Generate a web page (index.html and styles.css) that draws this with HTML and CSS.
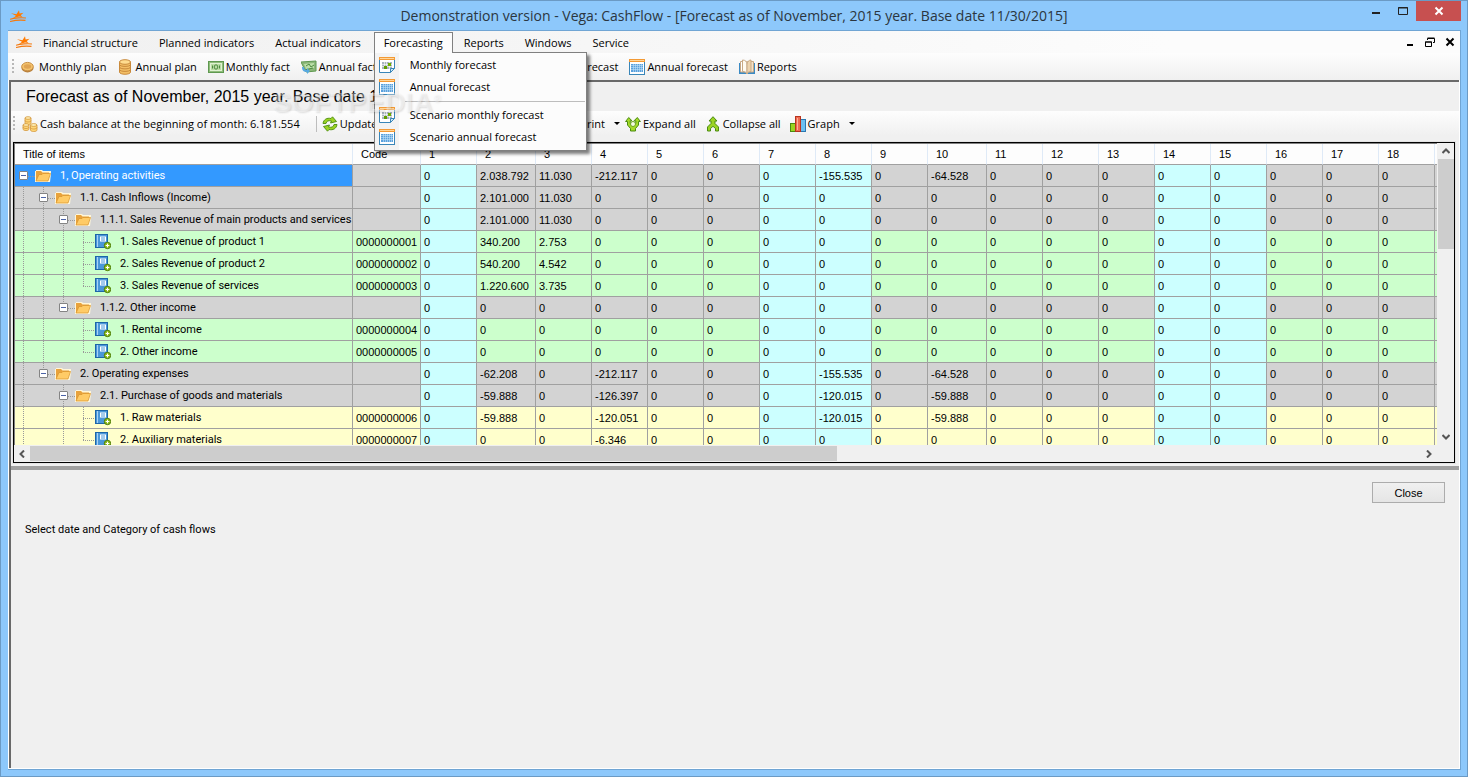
FILE: index.html
```html
<!DOCTYPE html>
<html lang="en">
<head>
    <meta charset="UTF-8">
    <meta name="viewport" content="width=device-width, initial-scale=1.0">
    <title>Vega: CashFlow</title>
    <link rel="stylesheet" href="styles.css">
</head>
<body>
    <svg class="sprite" aria-hidden="true">
        <symbol id="i-logo" viewBox="0 0 16 12">
            <path d="M0 9.3 C4 8 12 7.3 16 8 M0 11.6 C5 10.2 11 9.8 15.5 10.4" fill="none" stroke="#f47a10" stroke-width="1.1"/>
            <path d="M1 3.2 L6.5 4.2 L9 0.3 L9.6 3.6 L13.5 2.8 L10.7 5.2 L12.5 7 L9 6.5 L3 8.2 L6 5.8 Z" fill="#ff7a00"/>
        </symbol>
        <symbol id="i-coin" viewBox="0 0 16 16">
            <ellipse cx="6.5" cy="9" rx="6" ry="4.4" fill="#b9803c"/>
            <ellipse cx="6.5" cy="7.6" rx="5.8" ry="4.2" fill="#f3c26c" stroke="#c98f45"/>
            <ellipse cx="6.5" cy="7.5" rx="3.6" ry="2.2" fill="#dfa352"/>
        </symbol>
        <symbol id="i-coins" viewBox="0 0 16 16">
            <path d="M2.5 3v10c0 3 11 3 11 0V3z" fill="#f3bf66" stroke="#c98a3c"/>
            <path d="M2.5 5.5c0 2.5 11 2.5 11 0M2.5 8c0 2.5 11 2.5 11 0M2.5 10.5c0 2.5 11 2.5 11 0" fill="none" stroke="#c98a3c"/>
            <ellipse cx="8" cy="3" rx="5.5" ry="2.3" fill="#ffdc8f" stroke="#c98a3c"/>
        </symbol>
        <symbol id="i-note" viewBox="0 0 16 16">
            <rect x="0.5" y="2.5" width="15" height="11" fill="#8fbc7a" stroke="#5f9950"/>
            <rect x="2.5" y="4.5" width="11" height="7" fill="#b9dca4" stroke="#dff2d2"/>
            <ellipse cx="8" cy="8" rx="1.8" ry="2.2" fill="none" stroke="#4c8a3f"/>
            <path d="M4.5 6.5v3M11.5 6.5v3" stroke="#4c8a3f"/>
        </symbol>
        <symbol id="i-notes" viewBox="0 0 16 16">
            <path d="M0 3l15-1v10l-10 1z" fill="#8cb87a" stroke="#5f9950"/>
            <path d="M3 5l10-1v5l-8 1z" fill="#bcdfa8"/>
            <path d="M5 7l3-2 2 3 3-2M4 11l8-2" stroke="#4c8a3f" fill="none"/>
            <path d="M1 8c0 4 2 5 5 5v2l3-3-3-3v2c-2 0-3-1-3-3z" fill="#58a9e0"/>
        </symbol>
        <symbol id="i-month" viewBox="0 0 16 16">
            <path d="M0.5 2v13.500h11l4-4V2z" fill="#fff" stroke="#3a86b8"/>
            <rect width="16" height="3" fill="#f39a35"/>
            <path d="M1 1.500h14" stroke="#ffd79c"/>
            <rect x="3" y="5" width="10" height="7" fill="#a9b5be"/>
            <path d="M3 7.500h10M3 9.500h10M5.500 5v7M7.500 5v7M10.500 5v7" stroke="#fff" stroke-width="0.6"/>
            <rect x="9" y="6" width="3" height="3" fill="#6fae00"/>
            <rect x="5" y="9" width="3" height="3" fill="#5f9c00"/>
            <path d="M11.500 15.500v-4h4z" fill="#cfe8f7" stroke="#3a86b8"/>
        </symbol>
        <symbol id="i-year" viewBox="0 0 16 16">
            <rect x="0.5" y="1.5" width="15" height="14" fill="#fff" stroke="#3a86b8"/>
            <rect width="16" height="3" fill="#f39a35"/>
            <path d="M1 1.500h14" stroke="#ffd79c"/>
            <rect x="2" y="5" width="12" height="8" fill="#5ba0dc"/>
            <path d="M2 6.500h12M2 8.500h12M2 10.500h12M4.500 5v8M6.500 5v8M8.500 5v8M10.500 5v8M12.500 5v8" stroke="#bfe0f8" stroke-width="0.6"/>
        </symbol>
        <symbol id="i-book" viewBox="0 0 16 16">
            <path d="M0 4v11h16V4z" fill="#3a8ac4"/>
            <path d="M1.500 2.500v10.500h6V2.500z" fill="#fff" stroke="#c9a985"/>
            <path d="M8.500 2.500v10.500h6V2.500z" fill="#f5e3c8" stroke="#c9a985"/>
            <path d="M3.500 1c3 0 4.500 2 4.500 4V15c-1-2-2-2.500-4.500-2.500z" fill="#fffaf0" stroke="#c9a985"/>
            <path d="M12 1c-2 0-4 2-4 4v10c1-2 2-2.500 4-2.500z" fill="#ecd3ae" stroke="#c9a985"/>
        </symbol>
        <symbol id="i-balance" viewBox="0 0 16 16">
            <g fill="#ffd77a" stroke="#d3973c" stroke-width="0.8">
                <path d="M3 2v5c0 2 6 2 6 0V2z"/><ellipse cx="6" cy="2" rx="3" ry="1.3" fill="#fff0b8"/>
                <path d="M1 9v4c0 2 6 2 6 0V9z"/><ellipse cx="4" cy="9" rx="3" ry="1.3" fill="#fff0b8"/>
                <path d="M8.500 9v5c0 2 6.500 2 6.500 0V9z"/><ellipse cx="11.7" cy="9" rx="3.2" ry="1.4" fill="#fff0b8"/>
                <path d="M1 11c0 2 6 2 6 0M8.500 11.500c0 2 6.500 2 6.500 0M3 4.500c0 2 6 2 6 0" fill="none"/>
            </g>
        </symbol>
        <symbol id="i-update" viewBox="0 0 16 16">
            <g fill="#9bd322" stroke="#4b8c10" stroke-width="0.9" stroke-linejoin="round">
                <path d="M1 7.5C1.500 3.500 5 1.500 9 2.500L10.500 0.800 14.500 5.500 8.500 7 9.500 5C6.500 4.200 4.500 5 4 7.500z"/>
                <path d="M15 8.500c-.5 4-4 6-8 5L5.500 15.200 1.500 10.500 7.500 9 6.500 11c3 .8 5 0 5.500-2.500z"/>
            </g>
        </symbol>
        <symbol id="i-expand" viewBox="0 0 16 16">
            <path d="M5.500 15V12.500L2.500 9V5.500H0.600L3.700 1.500 7 4.800H5.200V7.500L8 10.200 10.800 7.500V4.800H9L12.300 1.500 15.400 5.500H13.500V9L10.500 12.500V15z" fill="#a5da28" stroke="#4b8c10"/>
            <circle cx="8" cy="8" r="2.5" fill="#f4fbe2" stroke="#6aa41c"/>
        </symbol>
        <symbol id="i-collapse" viewBox="0 0 16 16">
            <path d="M8 0.700L12 5H10V7.500L13.500 11V15H10.500V12.500L8 10.300 5.500 12.500V15H2.500V11L6 7.500V5H4z" fill="#9bd322" stroke="#4b8c10"/>
        </symbol>
        <symbol id="i-graph" viewBox="0 0 16 16">
            <rect x="0.5" y="7.5" width="5" height="8" fill="#9bd322" stroke="#4b8c10"/>
            <rect x="10.5" y="3.5" width="5" height="12" fill="#6cc0f2" stroke="#2b78b0"/>
            <rect x="5.5" y="0.5" width="5" height="15" fill="#f06a50" stroke="#b8341f"/>
            <path d="M7.500 2v12" stroke="#f9b09c"/>
        </symbol>
        <symbol id="i-folder" viewBox="0 0 16 14">
            <path d="M0 2h1v-1h6l1 1h8v3l-1 8h-15z" fill="#fff6d8"/>
            <path d="M1 12V2h5l1.500 1.500H14V6" fill="#e8a23c"/>
            <path d="M1 12L4 5.500h3L8 4.500h7.500L13 12z" fill="#ffcb66" stroke="#d9932b" stroke-width="0.7"/>
        </symbol>
        <symbol id="i-item" viewBox="0 0 16 16">
            <rect x="0.5" y="0.5" width="12" height="13" fill="#4a97d9" stroke="#1d66a8"/>
            <path d="M2.500 1v12" stroke="#a9d4f5"/>
            <rect x="5" y="2.5" width="6" height="5" fill="#fff"/>
            <path d="M6 4h4M6 6h4" stroke="#4a97d9"/>
            <circle cx="12.5" cy="11.5" r="3.2" fill="#8dbd1a" stroke="#4f7d0a"/>
            <path d="M12.500 9.700v3.600M10.700 11.500h3.600" stroke="#fff"/>
        </symbol>
        <symbol id="i-chevron" viewBox="0 0 8 6">
            <path d="M0.5 5L4 1.500 7.500 5" fill="none" stroke="#555" stroke-width="2"/>
        </symbol>
    </svg>

    <div class="window">
        <header class="titlebar">
            <svg class="logo"><use href="#i-logo"/></svg>
            <h1>Demonstration version - Vega: CashFlow - [Forecast as of November, 2015 year. Base date 11/30/2015]</h1>
            <div class="window-buttons">
                <button class="win-btn" aria-label="Minimize"><svg width="10" height="10"><path d="M1 7h8" stroke="#222" stroke-width="2"/></svg></button>
                <button class="win-btn" aria-label="Maximize"><svg width="10" height="10"><path d="M0.500 1.500h9v7h-9zM0 2h10" fill="none" stroke="#222"/></svg></button>
                <button class="win-btn win-close" aria-label="Close window"><svg width="10" height="10"><path d="M1.500 1.500l7 7M8.500 1.500l-7 7" stroke="#fff" stroke-width="2"/></svg></button>
            </div>
        </header>

        <div class="client">
            <nav class="menubar">
                <svg class="logo"><use href="#i-logo"/></svg>
                <button class="menu-item">Financial structure</button>
                <button class="menu-item">Planned indicators</button>
                <button class="menu-item">Actual indicators</button>
                <div class="menu-holder">
                    <button class="menu-item open">Forecasting</button>
                    <div class="dropdown">
                        <button class="entry"><svg class="icon"><use href="#i-month"/></svg><span>Monthly forecast</span></button>
                        <button class="entry"><svg class="icon"><use href="#i-year"/></svg><span>Annual forecast</span></button>
                        <hr>
                        <button class="entry"><svg class="icon"><use href="#i-month"/></svg><span>Scenario monthly forecast</span></button>
                        <button class="entry"><svg class="icon"><use href="#i-year"/></svg><span>Scenario annual forecast</span></button>
                    </div>
                </div>
                <button class="menu-item">Reports</button>
                <button class="menu-item">Windows</button>
                <button class="menu-item">Service</button>
                <div class="child-buttons">
                    <button aria-label="Minimize form"><svg width="10" height="10"><path d="M2 8h6" stroke="#000" stroke-width="2"/></svg></button>
                    <button aria-label="Restore form"><svg width="10" height="10"><path d="M2.500 3V1.500h7v4H8M2.500 1h7M0.500 5v4.500h6V5zM0 5h7" fill="none" stroke="#000"/></svg></button>
                    <button aria-label="Close form"><svg width="10" height="10"><path d="M1.500 1.500l7 7M8.500 1.500l-7 7" stroke="#000" stroke-width="2"/></svg></button>
                </div>
            </nav>

            <div class="toolbar main-tools">
                <i class="grip"></i>
                <button class="tool"><svg class="icon"><use href="#i-coin"/></svg>Monthly plan</button>
                <button class="tool"><svg class="icon"><use href="#i-coins"/></svg>Annual plan</button>
                <button class="tool"><svg class="icon"><use href="#i-note"/></svg>Monthly fact</button>
                <button class="tool"><svg class="icon"><use href="#i-notes"/></svg>Annual fact</button>
                <button class="tool after-menu">Monthly forecast</button>
                <button class="tool"><svg class="icon"><use href="#i-year"/></svg>Annual forecast</button>
                <button class="tool"><svg class="icon"><use href="#i-book"/></svg>Reports</button>
            </div>

            <main class="form">
                <div class="heading">
                    <h2>Forecast as of November, 2015 year. Base date 11/30/2015</h2>
                    <span class="watermark">SOFTPEDIA<sup>®</sup></span>
                </div>
                <div class="toolbar form-tools">
                    <i class="grip"></i>
                    <span class="tool"><svg class="icon"><use href="#i-balance"/></svg>Cash balance at the beginning of month: 6.181.554</span>
                    <i class="divider"></i>
                    <button class="tool"><svg class="icon"><use href="#i-update"/></svg>Update</button>
                    <button class="tool split after-menu">Print<i class="caret"></i></button>
                    <button class="tool"><svg class="icon"><use href="#i-expand"/></svg>Expand all</button>
                    <button class="tool"><svg class="icon"><use href="#i-collapse"/></svg>Collapse all</button>
                    <button class="tool split"><svg class="icon"><use href="#i-graph"/></svg>Graph<i class="caret"></i></button>
                </div>

                <div class="grid">
                    <div class="grid-view">
                        <table>
                            <colgroup id="cols"></colgroup>
                            <thead><tr id="head"></tr></thead>
                            <tbody id="rows"></tbody>
                        </table>
                    </div>
                    <div class="vscroll">
                        <button aria-label="Scroll up"><svg width="8" height="6"><use href="#i-chevron"/></svg></button>
                        <div class="thumb"></div>
                        <button aria-label="Scroll down"><svg class="down" width="8" height="6"><use href="#i-chevron"/></svg></button>
                    </div>
                    <div class="hscroll">
                        <button aria-label="Scroll left"><svg class="left" width="8" height="6"><use href="#i-chevron"/></svg></button>
                        <div class="track"><div class="thumb"></div></div>
                        <button aria-label="Scroll right"><svg class="right" width="8" height="6"><use href="#i-chevron"/></svg></button>
                    </div>
                </div>
                <div class="splitter"></div>
                <section class="details">
                    <button class="close">Close</button>
                    <p>Select date and Category of cash flows</p>
                </section>
            </main>
        </div>
    </div>

    <script>
        const DAYS = 18;
        const weekend = [1, 7, 8, 14, 15];
        const wide = [2, 10];

        // tree: b = box, u = box with line above, x = box with lines above and below,
        // v = line, t = branch, l = last branch, n = nothing
        const rows = [
            { tree: 'b', title: '1, Operating activities', kind: 'total', selected: true, values: { 2: '2.038.792', 3: '11.030', 4: '-212.117', 8: '-155.535', 10: '-64.528' } },
            { tree: 'vx', title: '1.1. Cash Inflows (Income)', kind: 'total', values: { 2: '2.101.000', 3: '11.030' } },
            { tree: 'vvx', title: '1.1.1. Sales Revenue of main products and services', kind: 'total', values: { 2: '2.101.000', 3: '11.030' } },
            { tree: 'vvvt', title: '1. Sales Revenue of product 1', kind: 'income', code: '0000000001', values: { 2: '340.200', 3: '2.753' } },
            { tree: 'vvvt', title: '2. Sales Revenue of product 2', kind: 'income', code: '0000000002', values: { 2: '540.200', 3: '4.542' } },
            { tree: 'vvvl', title: '3. Sales Revenue of services', kind: 'income', code: '0000000003', values: { 2: '1.220.600', 3: '3.735' } },
            { tree: 'vvu', title: '1.1.2. Other income', kind: 'total', values: {} },
            { tree: 'vvnt', title: '1. Rental income', kind: 'income', code: '0000000004', values: {} },
            { tree: 'vvnl', title: '2. Other income', kind: 'income', code: '0000000005', values: {} },
            { tree: 'vu', title: '2. Operating expenses', kind: 'total', values: { 2: '-62.208', 4: '-212.117', 8: '-155.535', 10: '-64.528' } },
            { tree: 'vnx', title: '2.1. Purchase of goods and materials', kind: 'total', values: { 2: '-59.888', 4: '-126.397', 8: '-120.015', 10: '-59.888' } },
            { tree: 'vnvt', title: '1. Raw materials', kind: 'expense', code: '0000000006', values: { 2: '-59.888', 4: '-120.051', 8: '-120.015', 10: '-59.888' } },
            { tree: 'vnvl', title: '2. Auxiliary materials', kind: 'expense', code: '0000000007', values: { 4: '-6.346' } }
        ];

        let cols = '<col class="c-title"><col class="c-code">';
        let head = '<th>Title of items</th><th>Code</th>';
        for (let d = 1; d <= DAYS; d++) {
            cols += `<col class="${wide.includes(d) ? 'c-wide' : 'c-day'}">`;
            head += `<th>${d}</th>`;
        }
        document.getElementById('cols').innerHTML = cols + '<col>';
        document.getElementById('head').innerHTML = head + '<th></th>';

        document.getElementById('rows').innerHTML = rows.map(row => {
            const guides = [...row.tree].map(g => {
                const box = 'bux'.includes(g) ? '<button class="toggle" aria-label="Collapse row"></button>' : '';
                return `<span class="guide g-${g}">${box}</span>`;
            }).join('');
            const icon = row.kind === 'total' ? 'i-folder' : 'i-item';
            let html = `<td class="${row.selected ? 'selected' : ''}"><div class="node">${guides}<svg class="icon"><use href="#${icon}"/></svg><span>${row.title}</span></div></td>`;
            html += `<td>${row.code || ''}</td>`;
            for (let d = 1; d <= DAYS; d++) {
                html += `<td class="${weekend.includes(d) ? 'weekend' : ''}">${row.values[d] || '0'}</td>`;
            }
            return `<tr class="${row.kind}">${html}<td></td></tr>`;
        }).join('');
    </script>
</body>
</html>
```
FILE: styles.css
```css
* {
    box-sizing: border-box;
}
body {
    margin: 0;
    font-family: "Open Sans", sans-serif;
    font-size: 11px;
    color: #000;
}
button {
    border: 0;
    padding: 0;
    margin: 0;
    background: none;
    font: inherit;
    color: inherit;
    white-space: nowrap;
}
h1, h2, p {
    margin: 0;
    font-weight: normal;
}
.sprite {
    display: none;
}
.icon {
    width: 16px;
    height: 16px;
    flex: none;
}
.logo {
    width: 16px;
    height: 12px;
    flex: none;
}

/* window frame */
.window {
    height: 100vh;
    display: flex;
    flex-direction: column;
    padding: 0 6px 6px 7px;
    border: 1px solid #6b9ac4;
    background: #8dc8fb;
}
.titlebar {
    display: flex;
    align-items: center;
    height: 29px;
    padding-left: 2px;
}
.titlebar h1 {
    flex: 1;
    padding-left: 80px;
    text-align: center;
    font-size: 14px;
    color: #2b3640;
    white-space: nowrap;
}
.window-buttons {
    display: flex;
    align-self: flex-start;
}
.win-btn {
    width: 27px;
    height: 20px;
}
.win-close {
    width: 45px;
    background: #c75050;
}
.client {
    flex: 1;
    display: flex;
    flex-direction: column;
    min-height: 0;
    border: 1px solid #70a5d4;
    border-left: 0;
    background: #fff;
}

/* menu */
.menubar {
    display: flex;
    align-items: center;
    gap: 1px;
    height: 22px;
    padding-left: 8px;
    background: linear-gradient(to right, #f0f0f0, #fcfcfc 80%);
}
.menu-item {
    height: 20px;
    padding: 0 9px;
    border: 1px solid transparent;
}
.menu-holder {
    position: relative;
    margin-left: 2px;
}
.menu-item.open {
    position: relative;
    z-index: 3;
    height: 21px;
    border-color: #808080;
    border-bottom: 0;
    background: #fcfcfc;
}
.dropdown {
    position: absolute;
    z-index: 2;
    top: 20px;
    left: 0;
    width: 213px;
    padding: 1px 1px 2px;
    border: 1px solid #808080;
    background: linear-gradient(to right, #f3f3f3 24px, #fcfcfc 24px);
    box-shadow: 3px 3px 3px rgba(0, 0, 0, 0.5);
}
.entry {
    display: flex;
    align-items: center;
    gap: 15px;
    width: 100%;
    height: 22px;
    padding-left: 3px;
}
.dropdown hr {
    margin: 3px 0 2px 29px;
    border: 0;
    border-top: 1px solid #bdbdbd;
}
.child-buttons {
    display: flex;
    gap: 10px;
    margin-left: auto;
    padding-right: 5px;
}
.child-buttons button {
    display: flex;
}

/* toolbars */
.toolbar {
    display: flex;
    align-items: center;
    height: 25px;
    background: linear-gradient(#fdfdfd, #f0f0f0);
}
.main-tools {
    height: 27px;
    padding-left: 4px;
}
.form-tools {
    padding-left: 2px;
}
.grip {
    width: 2px;
    height: 15px;
    margin-right: 3px;
    background: repeating-linear-gradient(#b8b8b8 0 2px, transparent 2px 4px);
}
.tool {
    display: flex;
    align-items: center;
    gap: 2px;
    height: 22px;
    padding: 0 5px 0 4px;
    white-space: nowrap;
}
.main-tools .tool {
    padding-right: 7px;
}
.divider {
    width: 1px;
    height: 16px;
    margin: 0 1px 0 11px;
    background: #bdbdbd;
}
.main-tools .after-menu {
    margin-left: 144px;
}
.form-tools .after-menu {
    margin-left: 194px;
}
.tool.split {
    padding-right: 1px;
}
.caret {
    margin-left: 7px;
    border: 3px solid transparent;
    border-top-color: #000;
    border-bottom: 0;
}

/* forecast form */
.form {
    flex: 1;
    display: flex;
    flex-direction: column;
    min-height: 0;
    margin: 0 1px 1px;
    border: solid #696969;
    border-width: 2px 0 0 2px;
    background: #f0f0f0;
}
.heading {
    position: relative;
    display: flex;
    align-items: center;
    height: 29px;
    padding-left: 15px;
}
.heading h2 {
    font: 16px "Liberation Sans", sans-serif;
}
.watermark {
    position: absolute;
    z-index: 4;
    left: 262px;
    top: 7px;
    font: bold 28px/28px "Liberation Sans", sans-serif;
    color: rgba(255, 255, 255, 0.4);
    text-shadow: 1px 1px 2px rgba(0, 0, 0, 0.12);
}
.watermark sup {
    font-size: 10px;
    line-height: 10px;
}
.grid {
    display: grid;
    grid-template: 302px 17px / 1fr 17px;
    margin: 6px 4px 0 2px;
    border: 1px solid #000;
    outline: 1px solid #e4e4e4;
    font-family: "Liberation Sans", sans-serif;
}
.grid-view {
    overflow: hidden;
    min-width: 0;
    border-left: 1px solid #808080;
    border-top: 1px solid #808080;
}
table {
    width: 1470px;
    table-layout: fixed;
    border-collapse: separate;
    border-spacing: 0;
}
.c-title {
    width: 338px;
}
.c-code {
    width: 68px;
}
.c-day {
    width: 56px;
}
.c-wide {
    width: 59px;
}
th {
    height: 21px;
    padding: 0 0 0 8px;
    border-right: 1px solid #dfeaf7;
    border-bottom: 1px solid #a0a0a0;
    background: #fdfdfd;
    text-align: left;
    font-weight: normal;
}
td {
    height: 22px;
    padding: 0 0 0 3px;
    border-right: 1px solid #a0a0a0;
    border-bottom: 1px solid #a0a0a0;
    white-space: nowrap;
}
td:first-child {
    padding: 0;
    font-family: Roboto, sans-serif;
}
.total td {
    background: #d3d3d3;
}
.income td {
    background: #ccffcc;
}
.expense td {
    background: #ffffcc;
}
tr .weekend.weekend {
    background: #ccffff;
}
tr .selected.selected {
    background: #3399ff;
    color: #fff;
}

/* tree */
.node {
    display: flex;
    align-items: center;
    height: 21px;
}
.node .icon {
    margin-right: 9px;
}
.guide {
    --v: repeating-linear-gradient(#999 0 1px, transparent 1px 2px);
    --h: repeating-linear-gradient(to right, #999 0 1px, transparent 1px 2px);
    flex: none;
    width: 20px;
    height: 21px;
    padding: 6px 0 0 4px;
}
.g-v {
    background: var(--v) 8px 0 / 1px 21px no-repeat;
}
.g-t {
    background: var(--v) 8px 0 / 1px 21px no-repeat, var(--h) 8px 11px / 12px 1px no-repeat;
}
.g-l {
    background: var(--v) 8px 0 / 1px 11px no-repeat, var(--h) 8px 11px / 12px 1px no-repeat;
}
.g-b {
    background: var(--h) 13px 11px / 7px 1px no-repeat;
}
.g-u {
    background: var(--v) 8px 0 / 1px 6px no-repeat, var(--h) 13px 11px / 7px 1px no-repeat;
}
.g-x {
    background: var(--v) 8px 0 / 1px 21px no-repeat, var(--h) 13px 11px / 7px 1px no-repeat;
}
.toggle {
    display: block;
    width: 9px;
    height: 9px;
    border: 1px solid #848484;
    border-radius: 1px;
    background: linear-gradient(#4b63a7, #4b63a7) center / 5px 1px no-repeat #fff;
}

/* scrollbars */
.vscroll, .hscroll {
    display: flex;
    background: #f0f0f0;
}
.vscroll {
    flex-direction: column;
    padding-left: 1px;
}
.hscroll {
    grid-column: 1 / 3;
    padding: 1px 17px 0 0;
}
.vscroll button, .hscroll button {
    display: flex;
    align-items: center;
    justify-content: center;
    width: 16px;
    height: 16px;
}
.vscroll .thumb {
    height: 90px;
    margin-bottom: auto;
    background: #cdcdcd;
}
.track {
    flex: 1;
}
.track .thumb {
    width: 58%;
    height: 15px;
    background: #cdcdcd;
}
.down {
    transform: rotate(180deg);
}
.left {
    transform: rotate(-90deg);
}
.right {
    transform: rotate(90deg);
}

/* lower pane */
.splitter {
    height: 4px;
    margin-top: 3px;
    background: #a0a0a0;
}
.details {
    flex: 1;
    display: flex;
    flex-direction: column;
    padding: 12px 14px 0;
    font-family: "Liberation Sans", sans-serif;
}
.close {
    align-self: flex-end;
    width: 73px;
    height: 21px;
    margin-bottom: 20px;
    border: 1px solid #acacac;
    background: linear-gradient(#f0f0f0, #e5e5e5);
}
.details p {
    font-family: Roboto, sans-serif;
}
```
